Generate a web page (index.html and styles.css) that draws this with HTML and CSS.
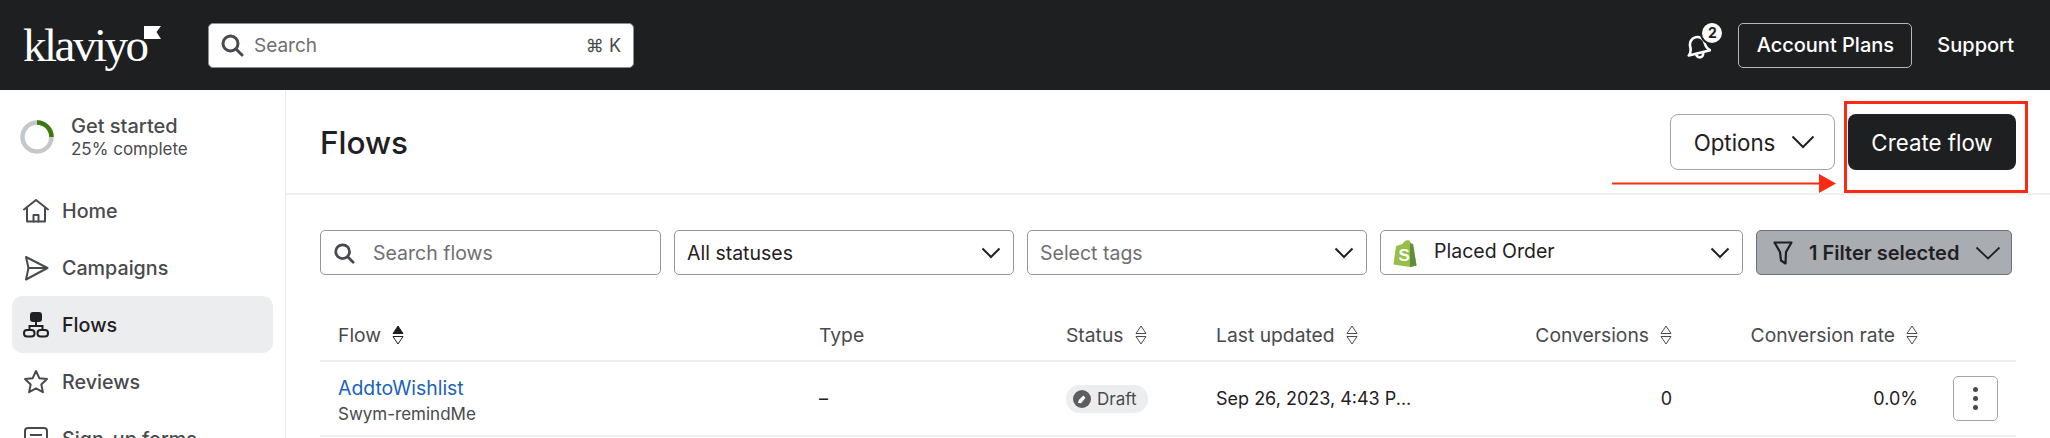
FILE: index.html
```html
<!DOCTYPE html>
<html lang="en">

<head>
    <meta charset="UTF-8">
    <meta name="viewport" content="width=device-width,initial-scale=1.0">
    <title>Flows</title>
    <link rel="stylesheet" href="styles.css">
</head>

<body>
    <!-- Top bar -->
    <header class="topbar">
        <div class="logo"><span>klaviyo</span><svg class="logo-flag" width="17" height="13" viewBox="0 0 17 13"><path d="M0 0H17L12.5 6 17 13H0Z" fill="#fff"/></svg></div>
        <div class="global-search">
            <svg width="24" height="24" viewBox="0 0 24 24" fill="none" stroke="#484a4d" stroke-width="3"><circle cx="10.5" cy="10.5" r="7.5"/><path d="M16 16l6 6" stroke-linecap="round"/></svg>
            <span class="global-search-text">Search</span>
            <span class="shortcut">⌘ K</span>
        </div>
        <div class="topbar-right">
            <div class="bell">
                <svg width="26" height="28" viewBox="0 0 26 28" fill="none" stroke="#fff" stroke-width="2.6" stroke-linejoin="round"><g transform="rotate(-14 13 14)"><path d="M13 4c-4.500 0-7.500 3.500-7.500 8 0 4-1 6-3.500 8h22c-2.500-2-3.500-4-3.500-8 0-4.500-3-8-7.500-8Z"/><path d="M9.500 21a3.500 3.500 0 0 0 7 0"/></g></svg>
                <span class="bell-badge">2</span>
            </div>
            <button class="plans-btn">Account Plans</button>
            <span class="support">Support</span>
        </div>
    </header>

    <div class="layout">
        <!-- Sidebar -->
        <aside class="sidebar">
            <div class="get-started">
                <svg width="36" height="36" viewBox="0 0 36 36" fill="none" stroke-width="4.500"><circle cx="18" cy="18" r="14.500" stroke="#c4c8cc"/><path d="M18 3.500A14.500 14.500 0 0 1 32.500 18" stroke="#3c7a10"/></svg>
                <div>
                    <div class="get-started-title">Get started</div>
                    <div class="get-started-sub">25% complete</div>
                </div>
            </div>
            <ul class="nav">
                <li>
                    <svg width="26" height="26" viewBox="0 0 26 26" fill="none" stroke="#484a4d" stroke-width="2" stroke-linejoin="round" stroke-linecap="round"><path d="M1 11.500 13 2l12 9.500"/><path d="M4 10v13.500h18V10"/><path d="M10.500 23.500V17h5v6.500"/></svg>
                    Home
                </li>
                <li>
                    <svg width="26" height="26" viewBox="0 0 26 26" fill="none" stroke="#484a4d" stroke-width="2" stroke-linejoin="round" stroke-linecap="round"><path d="M3 2 24.500 13 3 24.500 5.500 13Z"/><path d="M5.500 13H24"/></svg>
                    Campaigns
                </li>
                <li class="active">
                    <svg width="26" height="26" viewBox="0 0 26 26" fill="none" stroke="#1f2023" stroke-width="2"><rect x="8" y="1" width="10" height="8" rx="2" fill="#1f2023"/><path d="M13 9v5M6.500 18v-4h13v4"/><rect x="1" y="18" width="10.500" height="6.500" rx="3"/><rect x="14.500" y="18" width="10.500" height="6.500" rx="3"/></svg>
                    Flows
                </li>
                <li>
                    <svg width="26" height="26" viewBox="0 0 26 26" fill="none" stroke="#484a4d" stroke-width="2" stroke-linejoin="round"><path d="M13 2l3.300 7.200 7.700.9-5.700 5.300 1.600 7.800L13 19.300 6.100 23.200l1.600-7.800L2 10.100l7.700-.9Z"/></svg>
                    Reviews
                </li>
                <li>
                    <svg width="26" height="26" viewBox="0 0 26 26" fill="none" stroke="#484a4d" stroke-width="2"><rect x="2" y="2" width="22" height="22" rx="3"/><path d="M7 9h12M7 14h12"/></svg>
                    Sign-up forms
                </li>
            </ul>
        </aside>

        <!-- Main content -->
        <main class="content">
            <div class="page-head">
                <h1>Flows</h1>
                <div class="page-actions">
                    <button class="options-btn">Options
                        <svg width="24" height="14" viewBox="0 0 24 14" fill="none" stroke="#1f2023" stroke-width="2"><path d="M1.500 1.500 12 12 22.500 1.500"/></svg>
                    </button>
                    <button class="create-btn">Create flow</button>
                </div>
                <div class="mark-box"></div>
                <svg class="mark-arrow" width="224" height="20" viewBox="0 0 224 20"><path d="M0 8.500H208V10.500H0Z" fill="#fb2a13"/><path d="M207 0 224 9.500 207 19Z" fill="#fb2a13"/></svg>
            </div>

            <div class="table-area">
                <div class="filters">
                    <div class="field field-search">
                        <svg width="22" height="22" viewBox="0 0 24 24" fill="none" stroke="#484a4d" stroke-width="3"><circle cx="10.500" cy="10.500" r="7.500"/><path d="M16 16l6 6" stroke-linecap="round"/></svg>
                        <span class="placeholder">Search flows</span>
                    </div>
                    <div class="field field-status">
                        <span>All statuses</span>
                        <svg class="chev" width="20" height="12" viewBox="0 0 20 12" fill="none" stroke="#1f2023" stroke-width="2"><path d="M1.500 1.500 10 10l8.500-8.500"/></svg>
                    </div>
                    <div class="field field-tags">
                        <span class="placeholder">Select tags</span>
                        <svg class="chev" width="20" height="12" viewBox="0 0 20 12" fill="none" stroke="#1f2023" stroke-width="2"><path d="M1.500 1.500 10 10l8.500-8.500"/></svg>
                    </div>
                    <div class="field field-metric">
                        <svg width="24" height="28" viewBox="0 0 24 28"><path d="M16.500 1.500C14 .5 11 1.500 9.500 5L3 7 .5 25.500 17 28 23.500 26.500 20 5 17.800 4.600Z" fill="#95bf47"/><path d="M17 3 17.800 4.600 20 5 23.500 26.500 17 28Z" fill="#5e8e3e"/><text x="5.500" y="22" class="shopify-s">S</text></svg>
                        <span class="metric-name">Placed Order</span>
                        <svg class="chev" width="20" height="12" viewBox="0 0 20 12" fill="none" stroke="#1f2023" stroke-width="2"><path d="M1.500 1.500 10 10l8.500-8.500"/></svg>
                    </div>
                    <div class="field field-filter">
                        <svg class="funnel" width="20" height="24" viewBox="0 0 20 24" fill="none" stroke="#1f2023" stroke-width="2.200" stroke-linejoin="round"><path d="M1.500 1.500h17L13 11 12.500 22.500 8 19.500 7 11Z"/></svg>
                        <span class="filter-label">1 Filter selected</span>
                        <svg class="chev" width="26" height="14" viewBox="0 0 26 14" fill="none" stroke="#1f2023" stroke-width="1.800"><path d="M1.500 1.500 13 12.500 24.500 1.500"/></svg>
                    </div>
                </div>

                <div class="flow-table">
                    <div class="row row-head">
                        <div class="cell">Flow
                            <svg class="sort" width="12" height="20" viewBox="0 0 12 20"><path d="M6 1 11 8.500H1Z" fill="#1f2023" stroke="#1f2023"/><path d="M6 19 11 11.500H1Z" fill="none" stroke="#1f2023"/></svg>
                        </div>
                        <div class="cell">Type</div>
                        <div class="cell">Status
                            <svg class="sort" width="12" height="20" viewBox="0 0 12 20" fill="none" stroke="#484a4d"><path d="M6 1 11 8.500H1Z"/><path d="M6 19 11 11.500H1Z"/></svg>
                        </div>
                        <div class="cell">Last updated
                            <svg class="sort" width="12" height="20" viewBox="0 0 12 20" fill="none" stroke="#484a4d"><path d="M6 1 11 8.500H1Z"/><path d="M6 19 11 11.500H1Z"/></svg>
                        </div>
                        <div class="cell cell-num">Conversions
                            <svg class="sort" width="12" height="20" viewBox="0 0 12 20" fill="none" stroke="#484a4d"><path d="M6 1 11 8.500H1Z"/><path d="M6 19 11 11.500H1Z"/></svg>
                        </div>
                        <div class="cell cell-num">Conversion rate
                            <svg class="sort" width="12" height="20" viewBox="0 0 12 20" fill="none" stroke="#484a4d"><path d="M6 1 11 8.500H1Z"/><path d="M6 19 11 11.500H1Z"/></svg>
                        </div>
                        <div></div>
                    </div>
                    <div class="row row-body">
                        <div class="cell cell-flow">
                            <a class="flow-name">AddtoWishlist</a>
                            <span class="flow-tag">Swym-remindMe</span>
                        </div>
                        <div class="cell">–</div>
                        <div class="cell">
                            <span class="status-pill">
                                <svg width="18" height="18" viewBox="0 0 18 18"><circle cx="9" cy="9" r="9" fill="#5c5f62"/><path d="M5 13l.8-3 4.500-4.500 2.200 2.200L8 13.200Z" fill="#fff"/></svg>
                                Draft
                            </span>
                        </div>
                        <div class="cell">Sep 26, 2023, 4:43 P...</div>
                        <div class="cell cell-num">0</div>
                        <div class="cell cell-num">0.0%</div>
                        <div class="cell">
                            <button class="menu-btn"><i></i><i></i><i></i></button>
                        </div>
                    </div>
                </div>
            </div>
        </main>
    </div>
</body>

</html>
```

FILE: styles.css
```css
/* Reset */
* {
    margin: 0;
    padding: 0;
    box-sizing: border-box;
}

html,
body {
    height: 100%;
    overflow: hidden;
    font-family: Inter, 'Liberation Sans', sans-serif;
    color: #1f2023;
    background-color: #fff;
}

button {
    font-family: inherit;
}

/* Top bar */
.topbar {
    display: flex;
    align-items: center;
    height: 90px;
    padding: 0 36px 0 23px;
    background-color: #1e1f21;
}

.logo {
    display: flex;
    align-items: flex-start;
    width: 185px;
    height: 46px;
    color: #fff;
    font-family: 'Liberation Serif', serif;
    font-size: 47px;
    line-height: 46px;
    letter-spacing: -2.5px;
}

.logo-flag {
    margin: 4px 0 0 -2px;
}

.global-search {
    display: flex;
    align-items: center;
    gap: 10px;
    width: 426px;
    height: 45px;
    padding: 0 12px 0 11px;
    background-color: #fff;
    border: 1px solid #8c8e91;
    border-radius: 5px;
}

.global-search-text {
    flex: 1;
    font-size: 19px;
    color: #6d6f72;
}

.shortcut {
    font-size: 18px;
    color: #484a4d;
}

.topbar-right {
    display: flex;
    align-items: center;
    margin-left: auto;
    color: #fff;
    font-size: 20px;
    font-weight: 500;
}

.bell {
    position: relative;
    display: flex;
    margin-right: 27px;
    margin-top: 4px;
}

.bell-badge {
    position: absolute;
    top: -10px;
    right: -11px;
    width: 20px;
    height: 20px;
    border-radius: 50%;
    background-color: #fff;
    box-shadow: 0 0 0 2px #1e1f21;
    color: #1e1f21;
    font-size: 14px;
    font-weight: 700;
    line-height: 20px;
    text-align: center;
}

.plans-btn {
    height: 45px;
    width: 174px;
    margin-right: 25px;
    background: none;
    border: 1px solid #b5b7ba;
    border-radius: 5px;
    color: #fff;
    font-size: 20px;
    font-weight: 500;
}

/* Layout */
.layout {
    display: flex;
    height: 348px;
    overflow: hidden;
}

.sidebar {
    width: 286px;
    flex-shrink: 0;
    padding: 24px 12px 0;
    border-right: 1px solid #e8e9eb;
}

.get-started {
    display: flex;
    align-items: center;
    gap: 16px;
    padding-left: 7px;
    margin-bottom: 22px;
    color: #484a4d;
}

.get-started-title {
    font-size: 20px;
    font-weight: 500;
    line-height: 24px;
}

.get-started-sub {
    font-size: 17px;
    line-height: 22px;
}

.nav {
    list-style: none;
}

.nav li {
    display: flex;
    align-items: center;
    gap: 13px;
    height: 57px;
    padding-left: 11px;
    color: #484a4d;
    font-size: 19.700px;
    font-weight: 500;
    border-radius: 10px;
}

.nav li.active {
    background-color: #ecedef;
    color: #1f2023;
}

/* Page header */
.content {
    flex: 1;
    min-width: 0;
}

.page-head {
    position: relative;
    display: flex;
    align-items: center;
    justify-content: space-between;
    height: 105px;
    padding: 0 34px 25px 35px;
    border-bottom: 2px solid #eeeff1;
}

.page-head h1 {
    font-size: 31.500px;
    font-weight: 500;
    padding-top: 27px;
    margin-left: -1px;
}

.page-actions {
    display: flex;
    gap: 13px;
    padding-top: 26px;
}

.options-btn,
.create-btn {
    display: flex;
    align-items: center;
    justify-content: center;
    height: 56px;
    font-size: 22.300px;
    border-radius: 8px;
}

.options-btn {
    gap: 16px;
    width: 165px;
    padding-left: 4px;
    background-color: #fff;
    border: 1px solid #a3a5a8;
    color: #1f2023;
}

.create-btn {
    width: 168px;
    background-color: #1e1f21;
    border: none;
    color: #fff;
}

/* Red marks over the screenshot */
.mark-box {
    position: absolute;
    top: 11px;
    right: 22px;
    width: 184px;
    height: 92px;
    border: 3px solid #fb2a13;
}

.mark-arrow {
    position: absolute;
    top: 84px;
    left: 1326px;
}

/* Filters */
.table-area {
    padding: 35px 34px 0;
}

.filters {
    display: flex;
    gap: 13px;
    height: 45px;
}

.field {
    display: flex;
    align-items: center;
    padding: 0 12px;
    font-size: 19.500px;
    background-color: #fff;
    border: 1px solid #94969a;
    border-radius: 5px;
}

.field .chev {
    margin-left: auto;
}

.placeholder {
    color: #6d6f72;
}

.field-search {
    width: 341px;
    gap: 18px;
}

.field-status,
.field-tags {
    width: 340px;
}

.field-metric {
    width: 363px;
    gap: 17px;
}

.metric-name {
    padding-bottom: 4px;
}

.shopify-s {
    font-family: 'Liberation Sans', sans-serif;
    font-size: 17px;
    font-weight: 700;
    fill: #fff;
}

.field-filter {
    width: 256px;
    padding: 0 10px 0 16px;
    background-color: #a9acb0;
    border-color: #6f7276;
    font-size: 20px;
    font-weight: 600;
}

.funnel {
    margin-right: 16px;
}

.filter-label {
    white-space: nowrap;
}

/* Table */
.flow-table {
    margin-top: 37px;
}

.row {
    display: grid;
    grid-template-columns: 481px 247px 150px 240px 216px 246px 1fr;
    padding-left: 18px;
    border-bottom: 2px solid #eeeff1;
}

.row-head {
    height: 50px;
    color: #484a4d;
    font-size: 19.300px;
    padding-bottom: 3px;
}

.row-body {
    height: 75px;
    font-size: 18px;
}

.cell {
    display: flex;
    align-items: center;
    gap: 11px;
}

.cell-num {
    justify-content: flex-end;
}

.cell-flow {
    flex-direction: column;
    align-items: flex-start;
    justify-content: center;
    gap: 4px;
    padding-top: 2px;
}

.flow-name {
    color: #1a63b8;
    font-size: 19.400px;
    line-height: 24px;
}

.flow-tag {
    color: #484a4d;
    font-size: 17px;
    line-height: 20px;
}

.status-pill {
    display: flex;
    align-items: center;
    gap: 6px;
    width: 82px;
    height: 28px;
    padding-left: 7px;
    font-size: 17px;
    color: #484a4d;
    background-color: #ecedef;
    border-radius: 14px;
}

.menu-btn {
    display: flex;
    flex-direction: column;
    align-items: center;
    justify-content: center;
    gap: 4px;
    width: 45px;
    height: 45px;
    margin-left: 35px;
    background-color: #fff;
    border: 1px solid #a3a5a8;
    border-radius: 5px;
}

.menu-btn i {
    width: 5px;
    height: 5px;
    border-radius: 50%;
    background-color: #484a4d;
}
```
